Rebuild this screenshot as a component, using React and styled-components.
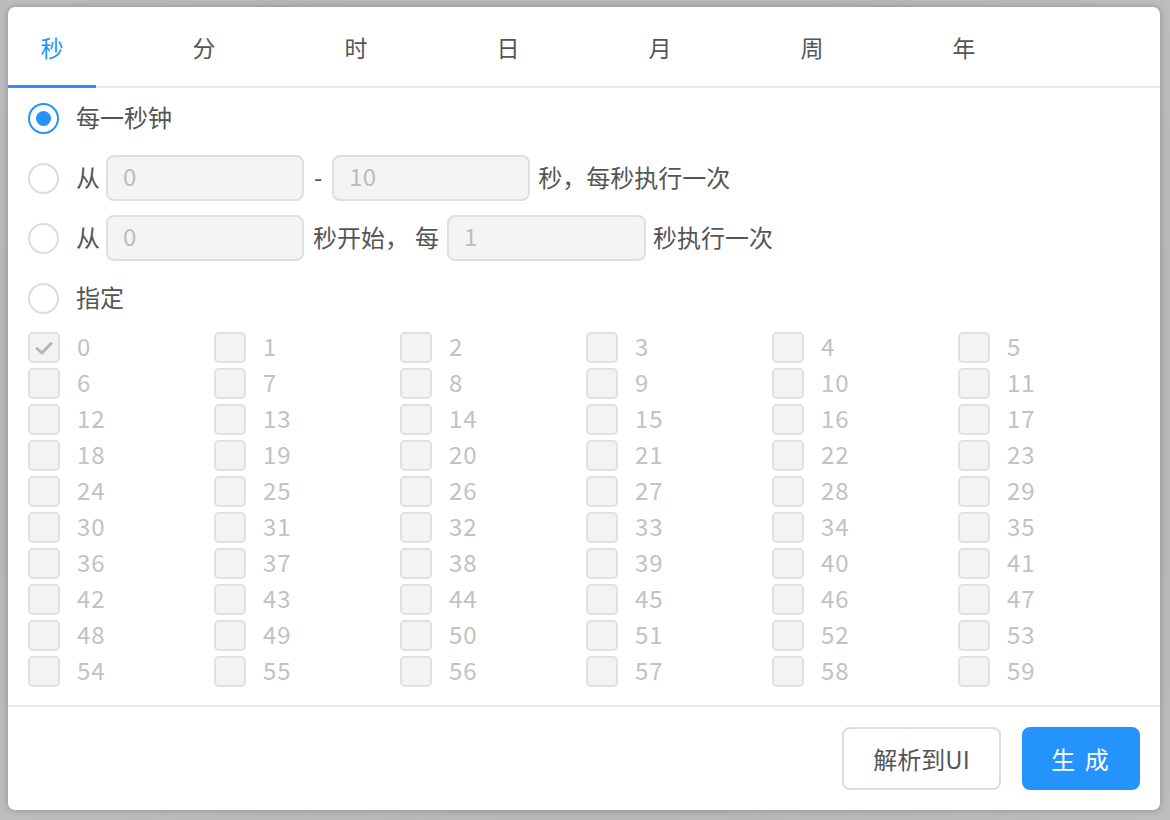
import React, { useState } from "react";
import styled, { createGlobalStyle } from "styled-components";

const BLUE = "#2593fc";
const FONT = `"Noto Sans CJK SC", "Noto Sans", sans-serif`;

const Global = createGlobalStyle`
  html, body { margin: 0; padding: 0; background: #bdbdbd; }
  body { font-family: ${FONT}; }
  * { box-sizing: border-box; }
`;

const Page = styled.div`
  width: 1170px;
  height: 820px;
  padding: 7px 10px 10px 8px;
  background: radial-gradient(ellipse at center, #a9a9a9 0%, #bdbdbd 100%);
`;

const Dialog = styled.div`
  width: 1152px;
  height: 803px;
  background: #fff;
  border-radius: 7px;
  box-shadow: 0 0 6px rgba(0, 0, 0, 0.25);
  display: flex;
  flex-direction: column;
  overflow: hidden;
`;

const TabBar = styled.div`
  display: flex;
  gap: 64px;
  height: 81px;
  box-shadow: inset 0 -2px 0 #e6e6e6;
  flex-shrink: 0;
`;

const Tab = styled.div`
  width: 88px;
  height: 81px;
  display: flex;
  align-items: center;
  justify-content: center;
  font-size: 23px;
  padding-top: 1px;
  color: ${(p) => (p.$active ? BLUE : "#555")};
  border-bottom: 3px solid ${(p) => (p.$active ? BLUE : "transparent")};
  cursor: pointer;
`;

const Body = styled.div`
  flex: 1;
  padding: 0 16px 0 20px;
  display: flex;
  flex-direction: column;
`;

const Row = styled.div`
  height: 60px;
  display: flex;
  align-items: center;
  font-size: 24px;
  color: #555;
`;

const Radio = styled.span`
  width: 31px;
  height: 31px;
  border-radius: 50%;
  border: 2px solid ${(p) => (p.$checked ? BLUE : "#dcdcdc")};
  display: inline-flex;
  align-items: center;
  justify-content: center;
  margin-right: 17px;
  flex-shrink: 0;
  &::after {
    content: "";
    width: 15px;
    height: 15px;
    border-radius: 50%;
    background: ${(p) => (p.$checked ? BLUE : "transparent")};
  }
`;

const Text = styled.span`
  margin: ${(p) => p.$m || "0"};
  white-space: nowrap;
  line-height: 1;
  padding-bottom: 2px;
`;

const Input = styled.div`
  width: ${(p) => p.$w || 198}px;
  height: 46px;
  border: 2px solid #dfdfdf;
  border-radius: 8px;
  background: #f4f4f4;
  color: #bcbcbc;
  font-size: 24px;
  line-height: 1;
  padding: 0 0 4px 15px;
  display: flex;
  align-items: center;
  margin: ${(p) => p.$m || "0"};
`;

const Grid = styled.div`
  margin-top: 4px;
  display: grid;
  grid-template-columns: repeat(6, 186px);
  row-gap: 5px;
`;

const Cell = styled.div`
  display: flex;
  align-items: center;
  height: 31px;
  font-size: 24px;
  color: #c2c2c2;
`;

const Num = styled.span`
  line-height: 1;
  padding-bottom: 3px;
  letter-spacing: 1px;
`;

const Box = styled.span`
  width: 32px;
  height: 31px;
  border: 2px solid #e0e0e0;
  background: #f3f3f3;
  border-radius: 5px;
  margin-right: 17px;
  display: inline-flex;
  align-items: center;
  justify-content: center;
  flex-shrink: 0;
`;

const Footer = styled.div`
  border-top: 2px solid #e6e6e6;
  height: 105px;
  flex-shrink: 0;
  display: flex;
  justify-content: flex-end;
  align-items: flex-start;
  padding: 20px 20px 0 0;
  gap: 21px;
`;

const Button = styled.button`
  height: 63px;
  width: ${(p) => p.$w}px;
  border-radius: 8px;
  font-family: ${FONT};
  font-size: 24px;
  border: 2px solid ${(p) => (p.$primary ? BLUE : "#dcdcdc")};
  background: ${(p) => (p.$primary ? BLUE : "#fff")};
  color: ${(p) => (p.$primary ? "#fff" : "#555")};
  letter-spacing: ${(p) => (p.$primary ? "2px" : "0")};
  cursor: pointer;
  padding: 0;
`;

const tabs = ["秒", "分", "时", "日", "月", "周", "年"];

export default function App() {
  const [active, setActive] = useState(0);
  const nums = Array.from({ length: 60 }, (_, i) => i);
  return (
    <>
      <Global />
      <Page>
        <Dialog>
          <TabBar>
            {tabs.map((t, i) => (
              <Tab key={t} $active={i === active} onClick={() => setActive(i)}>
                {t}
              </Tab>
            ))}
          </TabBar>
          <Body>
            <Row>
              <Radio $checked />
              <Text>每一秒钟</Text>
            </Row>
            <Row>
              <Radio />
              <Text>从</Text>
              <Input $m="0 0 0 6px">0</Input>
              <Text $m="0 10px">-</Text>
              <Input>10</Input>
              <Text $m="0 0 0 8px">秒，每秒执行一次</Text>
            </Row>
            <Row>
              <Radio />
              <Text>从</Text>
              <Input $m="0 0 0 6px">0</Input>
              <Text $m="0 0 0 9px">秒开始，</Text>
              <Text $m="0 0 0 6px">每</Text>
              <Input $m="0 0 0 8px" $w={199}>1</Input>
              <Text $m="0 0 0 7px">秒执行一次</Text>
            </Row>
            <Row>
              <Radio />
              <Text>指定</Text>
            </Row>
            <Grid>
              {nums.map((n) => (
                <Cell key={n}>
                  <Box>
                    {n === 0 && (
                      <svg width="18" height="14" viewBox="0 0 18 14">
                        <path
                          d="M2 7.5 L7 12 L16 2.5"
                          fill="none"
                          stroke="#b5b5b5"
                          strokeWidth="3"
                          strokeLinecap="round"
                          strokeLinejoin="round"
                        />
                      </svg>
                    )}
                  </Box>
                  <Num>{n}</Num>
                </Cell>
              ))}
            </Grid>
          </Body>
          <Footer>
            <Button $w={159}>解析到UI</Button>
            <Button $primary $w={118}>生 成</Button>
          </Footer>
        </Dialog>
      </Page>
    </>
  );
}
